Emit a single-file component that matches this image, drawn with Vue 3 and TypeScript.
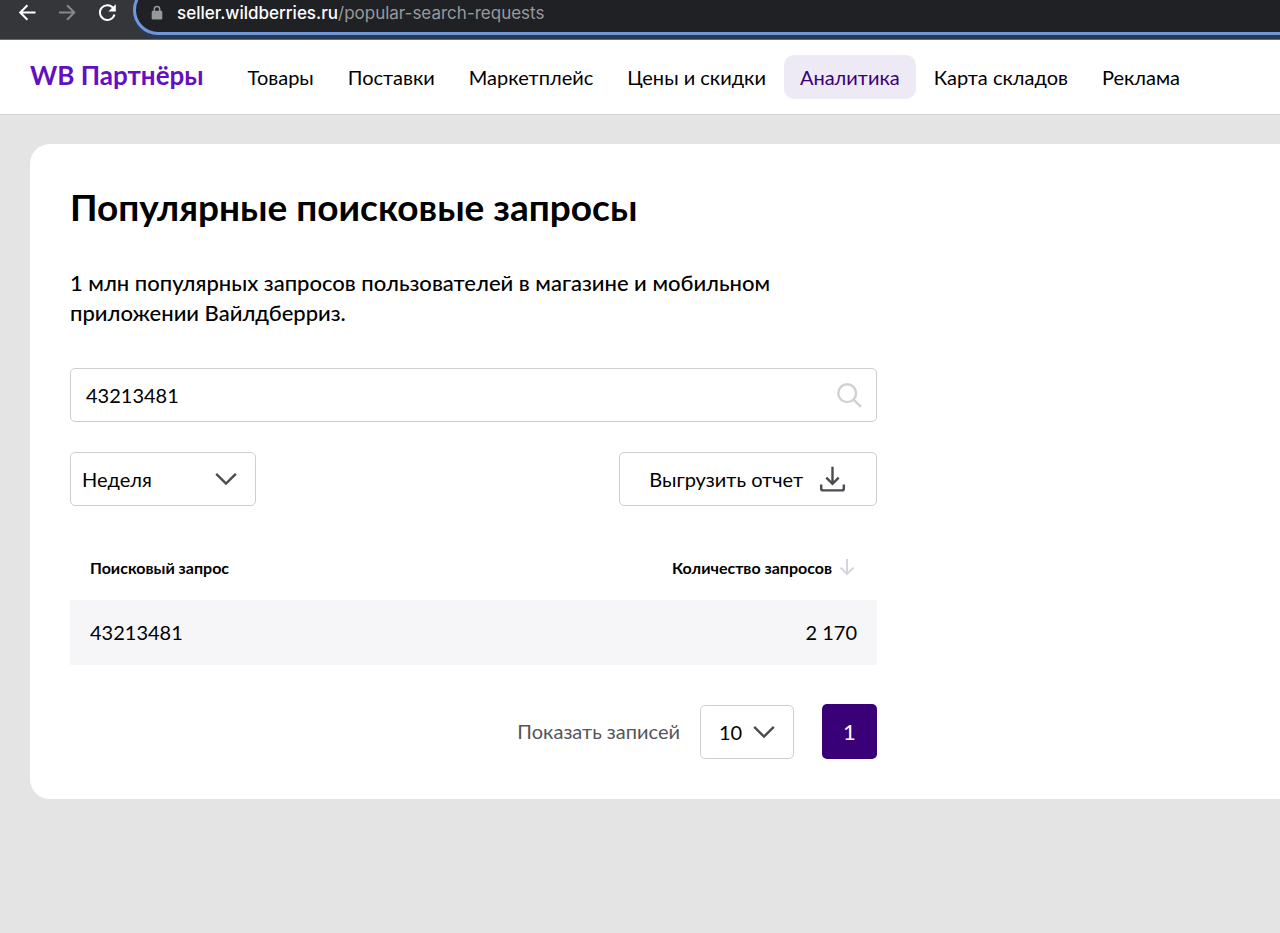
<script setup lang="ts">
import { ref } from 'vue'

interface NavItem {
  label: string
  active?: boolean
}

interface QueryRow {
  query: string
  count: string
}

const navItems: NavItem[] = [
  { label: 'Товары' },
  { label: 'Поставки' },
  { label: 'Маркетплейс' },
  { label: 'Цены и скидки' },
  { label: 'Аналитика', active: true },
  { label: 'Карта складов' },
  { label: 'Реклама' },
]

const rows: QueryRow[] = [{ query: '43213481', count: '2 170' }]

const search = ref('43213481')
const period = ref('Неделя')
const pageSize = ref('10')
</script>

<template>
  <div class="page">
    <div class="browser">
      <div class="browser-buttons">
        <button type="button" aria-label="Назад">
          <svg width="24" height="24" viewBox="0 0 24 24"><path d="M20.5 12.5H5.5M12.4 5.3l-7.2 7.2 7.2 7.2" stroke="#fff" /></svg>
        </button>
        <button type="button" aria-label="Вперёд">
          <svg width="24" height="24" viewBox="0 0 24 24"><path d="M4 12.5H19M12.1 5.3l7.2 7.2-7.2 7.2" stroke="#86878a" /></svg>
        </button>
        <button type="button" aria-label="Обновить">
          <svg width="24" height="24" viewBox="0 0 24 24">
            <path d="M18.4 8.3A7.4 7.4 0 1 0 19.5 14.5" stroke="#fff" />
            <path d="M20.8 4.2v7.4h-7.4z" fill="#fff" />
          </svg>
        </button>
      </div>
      <div class="address">
        <svg width="12" height="16" viewBox="0 0 12 16">
          <rect x="0.7" y="5.8" width="10.6" height="8.7" rx="1.3" fill="#96989b" />
          <path d="M3.3 6.3v-2a2.7 2.7 0 0 1 5.4 0v2" fill="none" stroke="#96989b" stroke-width="1.5" />
        </svg>
        <span class="url"><span class="host">seller.wildberries.ru</span>/popular-search-requests</span>
      </div>
    </div>

    <header class="header">
      <a class="brand" href="#">WB Партнёры</a>
      <nav class="nav">
        <a v-for="item in navItems" :key="item.label" href="#" :class="{ active: item.active }">{{ item.label }}</a>
      </nav>
    </header>

    <main class="card">
      <h1>Популярные поисковые запросы</h1>
      <div class="content">
        <p class="lead">1 млн популярных запросов пользователей в магазине и мобильном приложении Вайлдберриз.</p>

        <label class="field search">
          <input v-model="search" type="text" aria-label="Поисковый запрос" />
          <svg width="26" height="26" viewBox="0 0 26 26">
            <circle cx="11.2" cy="11.2" r="8.9" stroke="#d0d0d5" />
            <path d="M17.5 17.6l7.5 7.2" stroke="#d0d0d5" />
          </svg>
        </label>

        <div class="tools">
          <div class="field period">
            <select v-model="period" aria-label="Период">
              <option>Неделя</option>
            </select>
            <svg class="chevron" width="22" height="14" viewBox="0 0 22 14"><path d="M1.2 1.8L11 11.6l9.8-9.8" /></svg>
          </div>
          <button class="field export" type="button">
            Выгрузить отчет
            <svg width="25" height="26" viewBox="0 0 25 26">
              <path d="M12.5 .8v17M6.3 11.6l6.2 6.2 6.2-6.2M1.2 18.4v4a2 2 0 0 0 2 2h18.6a2 2 0 0 0 2-2v-4" stroke="#4c4b50" />
            </svg>
          </button>
        </div>

        <table>
          <thead>
            <tr>
              <th scope="col">Поисковый запрос</th>
              <th scope="col" class="count">
                <span class="sort">
                  Количество запросов
                  <svg width="16" height="18" viewBox="0 0 16 18"><path d="M8 0v15M1.5 8.6L8 15l6.5-6.4" /></svg>
                </span>
              </th>
            </tr>
          </thead>
          <tbody>
            <tr v-for="row in rows" :key="row.query">
              <td>{{ row.query }}</td>
              <td class="count">{{ row.count }}</td>
            </tr>
          </tbody>
        </table>

        <div class="pager">
          <label for="page-size">Показать записей</label>
          <div class="field size">
            <select id="page-size" v-model="pageSize">
              <option>10</option>
            </select>
            <svg class="chevron" width="22" height="14" viewBox="0 0 22 14"><path d="M1.2 1.8L11 11.6l9.8-9.8" /></svg>
          </div>
          <button class="current" type="button">1</button>
        </div>
      </div>
    </main>
  </div>
</template>

<style>
body {
  margin: 0;
  background: #e4e4e4;
}
</style>

<style scoped>
* {
  box-sizing: border-box;
}

.page {
  min-height: 100vh;
  overflow-x: hidden;
  background: #e4e4e4;
  color: #000;
  font: 400 20px/30px Lato, Carlito, "Open Sans", sans-serif;
}

button,
input,
select {
  margin: 0;
  padding: 0;
  border: 0;
  background: none;
  color: inherit;
  font: inherit;
}

svg {
  display: block;
  flex: none;
  fill: none;
  stroke-width: 2.4;
}

a {
  color: inherit;
  text-decoration: none;
}

.browser {
  display: flex;
  height: 40px;
  overflow: hidden;
  border-bottom: 1px solid #6b6b6e;
  background: #35363a;
}

.browser-buttons {
  display: flex;
  flex: none;
  gap: 16px;
  width: 133px;
  padding-left: 15px;
}

.browser-buttons button {
  height: 24px;
}

.browser-buttons svg {
  stroke-width: 2;
}

.address {
  display: flex;
  flex: 1;
  align-items: center;
  gap: 14px;
  height: 50px;
  margin: -15px -30px 0 0;
  padding: 6px 0 0 15px;
  border: 3px solid #6e97dc;
  border-radius: 25px;
  background: #202124;
  box-shadow: 0 5px 0 #2c3a50;
  color: #98999c;
  font: 400 17px/22px Inter, Roboto, sans-serif;
}

.host {
  color: #fff;
  font-weight: 500;
}

.header {
  display: flex;
  align-items: center;
  gap: 28px;
  height: 75px;
  padding: 0 30px;
  border-bottom: 1px solid #d3d3d3;
  background: #fff;
  white-space: nowrap;
}

.brand {
  padding-bottom: 4px;
  color: #6210c0;
  font-size: 26px;
  font-weight: 700;
}

.nav {
  display: flex;
  gap: 2px;
}

.nav a {
  padding: 7px 16px;
  border-radius: 10px;
}

.nav .active {
  background: #eeeaf5;
  color: #3a0078;
}

.card {
  margin: 29px 0 0 30px;
  padding: 40px;
  border-radius: 20px 0 0 20px;
  background: #fff;
}

h1 {
  margin: 0;
  font-size: 37px;
  font-weight: 700;
  line-height: 46px;
}

.content {
  max-width: 807px;
}

.lead {
  max-width: 740px;
  margin: 38px 0 40px;
  font-size: 22px;
  font-weight: 500;
}

.field {
  display: flex;
  align-items: center;
  height: 54px;
  border: 1px solid #cfcfd2;
  border-radius: 5px;
}

.search {
  padding: 0 14px 0 15px;
}

.search input {
  flex: 1;
  min-width: 0;
  outline: none;
}

.tools {
  display: flex;
  justify-content: space-between;
  margin: 30px 0 38px;
}

.period,
.size {
  display: grid;
}

.period select,
.size select {
  grid-area: 1 / 1;
  width: 100%;
  height: 52px;
  appearance: none;
  outline: none;
}

.chevron {
  grid-area: 1 / 1;
  justify-self: end;
  margin-right: 18px;
  stroke: #4c4b50;
  pointer-events: none;
}

.period {
  width: 186px;
}

.period select {
  padding-left: 11px;
}

.size {
  width: 94px;
}

.size select {
  padding-left: 18px;
}

.export {
  gap: 17px;
  padding: 0 31px 0 29px;
}

table {
  width: 100%;
  border-collapse: collapse;
}

th {
  height: 56px;
  padding: 0 20px 8px;
  font-size: 16px;
  font-weight: 700;
  text-align: left;
}

td {
  height: 65px;
  padding: 0 20px 2px;
  background: #f6f6f9;
}

.count {
  text-align: right;
}

.sort {
  display: inline-flex;
  align-items: center;
  gap: 7px;
}

.sort svg {
  margin-right: 2px;
  stroke: #d5d5db;
  stroke-width: 2;
}

.pager {
  display: flex;
  align-items: center;
  justify-content: flex-end;
  margin-top: 39px;
}

.pager label {
  margin-right: 20px;
  padding-bottom: 2px;
  color: #55555a;
}

.current {
  width: 55px;
  height: 55px;
  margin-left: 28px;
  border-radius: 5px;
  background: #3a0078;
  color: #fff;
  font-size: 22px;
}
</style>
